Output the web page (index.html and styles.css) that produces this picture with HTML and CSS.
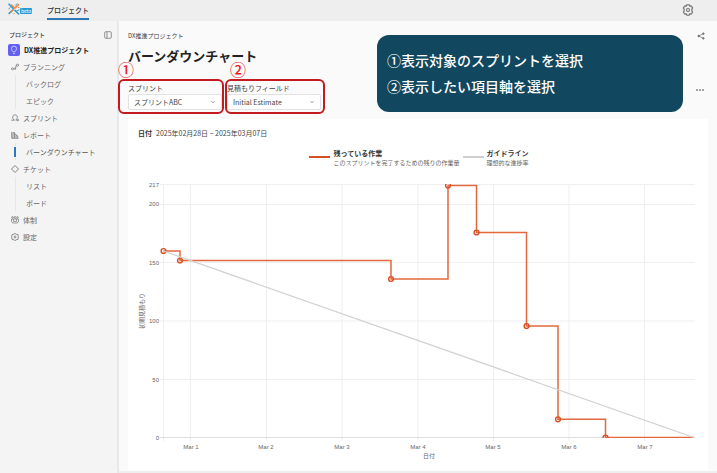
FILE: index.html
```html
<!DOCTYPE html>
<html lang="ja">
<head>
<meta charset="utf-8">
<meta name="viewport" content="width=device-width, initial-scale=1">
<title>バーンダウンチャート</title>
<link rel="stylesheet" href="styles.css">
</head>
<body>
<header class="topbar">
  <a class="brand" href="#">
    <svg class="brand-mark" viewBox="0 0 12 12" fill="none" stroke-width="1.6" stroke-linecap="round">
      <path stroke="#2b9bd8" d="M1 1.2 5.2 5.4M7 7.4l3.6 3.6M1.2 10.4l3.6-3.5"/>
      <path stroke="#f08a3c" d="m6.8 5.2 3.6-3.6M4.8 7.2 3 9M3.4 2l2.8 2.6"/>
      <path stroke="#2b9bd8" stroke-width="1" d="M7.6 2.2 9 .8M8.6 8 11 7M2 4.6.8 6"/>
      <circle cx="10.8" cy="4.4" r=".7" fill="#f08a3c"/>
      <circle cx="6" cy="10.6" r=".7" fill="#f08a3c"/>
    </svg>
    <span class="beta">beta</span>
  </a>
  <nav class="tabs"><a class="tab" href="#">プロジェクト</a></nav>
  <button class="icon-button settings" aria-label="設定">
    <svg viewBox="0 0 12 12" fill="none" stroke="currentColor" stroke-width="1.2" stroke-linejoin="round"><path d="M4.700.8h2.600l.4 1.400 1.400-.3 1.500 2-.7 1.200v1.800l.7 1.200-1.500 2-1.400-.3-.4 1.400H4.700l-.4-1.400-1.400.3-1.500-2 .7-1.200V5.100l-.7-1.200 1.500-2 1.400.3z"/><circle cx="6" cy="6" r="1.500"/></svg>
  </button>
</header>
<div class="shell">
  <aside class="sidebar">
    <div class="side-head">
      <span>プロジェクト</span>
      <button class="icon-button" aria-label="サイドバーを閉じる">
        <svg class="small-icon" viewBox="0 0 8 8" fill="none" stroke="currentColor" stroke-width=".8"><rect x=".7" y=".7" width="6.6" height="6.6" rx="1"/><path d="M3 1v6"/></svg>
      </button>
    </div>
    <a class="project" href="#">
      <svg class="project-icon" viewBox="0 0 12 12"><rect width="12" height="12" rx="2" fill="#6260f5"/><path fill="none" stroke="#d5d5ff" stroke-width=".8" d="M4.8 7.8C4.7 6.8 3.4 6.2 3.4 4.7a2.6 2.6 0 0 1 5.2 0c0 1.5-1.3 2.1-1.4 3.1zM5 9.5h2"/></svg>
      DX推進プロジェクト
    </a>
    <nav class="nav">
      <a class="nav-row" href="#"><svg class="small-icon" viewBox="0 0 8 8" fill="none" stroke="currentColor" stroke-width=".8"><circle cx="1.500" cy="5.800" r="1"/><circle cx="6.500" cy="2.200" r="1.100"/><path d="M2.500 5.800h1.600c1.200 0 .2-3.600 1.400-3.600M3.800 6.900l1.100-1.100-1.100-1"/></svg>プランニング</a>
      <div class="subnav">
        <a class="sub-row" href="#">バックログ</a>
        <a class="sub-row" href="#">エピック</a>
      </div>
      <a class="nav-row" href="#"><svg class="small-icon" viewBox="0 0 8 8" fill="none" stroke="currentColor" stroke-width=".8"><path d="M.3 6.2h3L2 4.6a2.4 2.4 0 1 1 4 0L4.8 6.2h2.8M6.6 5l1.1 1.2-1.1 1"/></svg>スプリント</a>
      <a class="nav-row" href="#"><svg class="small-icon" viewBox="0 0 8 8" fill="none" stroke="currentColor" stroke-width=".8"><path d="M.7.9v6.4h6.8M2 7V1.5h1.5V7M3.5 3.2H5V7M5 4.8h1.7V7"/></svg>レポート</a>
      <div class="subnav">
        <a class="sub-row current" href="#" aria-current="page">バーンダウンチャート</a>
      </div>
      <a class="nav-row" href="#"><svg class="small-icon" viewBox="0 0 8 8" fill="none" stroke="currentColor" stroke-width=".9" stroke-linejoin="round"><path d="M4 .5 7.5 4 4 7.5.5 4z"/></svg>チケット</a>
      <div class="subnav">
        <a class="sub-row" href="#">リスト</a>
        <a class="sub-row" href="#">ボード</a>
      </div>
      <a class="nav-row" href="#"><svg class="small-icon" viewBox="0 0 8 8" fill="none" stroke="currentColor" stroke-width=".7"><circle cx="1.500" cy="1.400" r=".8"/><circle cx="4" cy="1.400" r=".9"/><circle cx="6.500" cy="1.400" r=".8"/><path d="M.5 3h7v2.200L6.500 7h-5l-1-1.800zM2.500 3v2.500h3V3"/></svg>体制</a>
      <a class="nav-row" href="#"><svg class="small-icon" viewBox="0 0 8 8" fill="none" stroke="currentColor" stroke-width=".8" stroke-linejoin="round"><path d="m4 .4 1.1.8 1.900.4.2 1.500L7.500 4l-.3.9L7 6.400l-1.900.4L4 7.600l-1.100-.8L1 6.400.8 4.900.5 4l.3-.9L1 1.600l1.900-.4z"/><circle cx="4" cy="4" r="1"/></svg>設定</a>
    </nav>
  </aside>
  <main class="main">
    <div class="crumbs">
      <span>DX推進プロジェクト</span>
      <button class="icon-button" aria-label="共有">
        <svg class="small-icon" viewBox="0 0 8 8" fill="currentColor" stroke="currentColor" stroke-width=".7"><path fill="none" d="M6.300 1.700 1.900 4l4.400 2.300"/><circle cx="6.300" cy="1.700" r=".9"/><circle cx="1.700" cy="4" r=".9"/><circle cx="6.300" cy="6.300" r=".9"/></svg>
      </button>
    </div>
    <h1 class="title">バーンダウンチャート</h1>
    <div class="filters">
      <div class="field field-sprint">
        <span class="marker">①</span>
        <label for="sprint">スプリント</label>
        <select id="sprint"><option>スプリントABC</option></select>
      </div>
      <div class="field field-estimate">
        <span class="marker">②</span>
        <label for="estimate">見積もりフィールド</label>
        <select id="estimate"><option>Initial Estimate</option></select>
      </div>
      <button class="icon-button more" aria-label="その他">
        <svg class="small-icon" viewBox="0 0 8 8" fill="currentColor"><circle cx="1" cy="4" r=".9"/><circle cx="4" cy="4" r=".9"/><circle cx="7" cy="4" r=".9"/></svg>
      </button>
    </div>
    <section class="card">
      <p class="period"><b>日付</b><span>2025年02月28日 − 2025年03月07日</span></p>
      <div class="legend">
        <div class="legend-item"><i class="swatch swatch-work"></i><div><b>残っている作業</b><small>このスプリントを完了するための残りの作業量</small></div></div>
        <div class="legend-item"><i class="swatch swatch-guide"></i><div><b>ガイドライン</b><small>理想的な進捗率</small></div></div>
      </div>
      <svg class="chart" viewBox="128 174 580 297" role="img" aria-label="バーンダウンチャート">
        <defs><clipPath id="plot"><path d="M159 184h541v254H159z"/></clipPath></defs>
        <path class="grid" d="M160 184.500h535M160 204.500h535M160 262.500h535M160 321h535M160 379.500h535M163.500 184v257M190.500 184v257M266.500 184v257M342 184v257M418 184v257M493.500 184v257M569 184v257M644.500 184v257"/>
        <path class="axis" d="M160 437.500h535"/>
        <g clip-path="url(#plot)">
          <path class="work" d="M163.500 251H180v9.500h211V279h57v-93.500h28.500v47h50V326h31.500v93.300h47.500V437.500H694"/>
          <g class="points">
            <circle cx="163.500" cy="251" r="2.400"/><circle cx="180" cy="260.500" r="2.400"/><circle cx="391" cy="279" r="2.400"/><circle cx="448" cy="185.500" r="2.400"/><circle cx="476.500" cy="232.500" r="2.400"/><circle cx="526.500" cy="326" r="2.400"/><circle cx="558" cy="419.300" r="2.400"/><circle cx="605.500" cy="437.500" r="2.400"/>
          </g>
          <path class="guide" d="m163.500 251 530.500 186.500"/>
        </g>
        <g class="labels" text-anchor="end">
          <text x="159" y="187">217</text><text x="159" y="206">200</text><text x="159" y="265">150</text><text x="159" y="323">100</text><text x="159" y="382">50</text><text x="159" y="440">0</text>
        </g>
        <g class="labels" text-anchor="middle">
          <text x="191" y="449">Mar 1</text><text x="266" y="449">Mar 2</text><text x="342" y="449">Mar 3</text><text x="418" y="449">Mar 4</text><text x="493" y="449">Mar 5</text><text x="569" y="449">Mar 6</text><text x="645" y="449">Mar 7</text>
          <text x="429" y="458">日付</text>
          <text transform="translate(144 311) rotate(-90)">初期見積もり</text>
        </g>
      </svg>
    </section>
    <aside class="callout">
      <p>①表示対象のスプリントを選択</p>
      <p>②表示したい項目軸を選択</p>
    </aside>
  </main>
</div>
</body>
</html>
```
FILE: styles.css
```css
* { box-sizing: border-box; }
body {
  margin: 0;
  min-height: 100vh;
  display: flex;
  flex-direction: column;
  background: #fafafa;
  color: #444;
  font: 7px/10px "Noto Sans CJK JP", sans-serif;
}
a { color: inherit; text-decoration: none; }
p { margin: 0; }
svg { display: block; }
.icon-button {
  display: block;
  padding: 0;
  border: 0;
  background: none;
  color: #777;
}
.small-icon { width: 8px; height: 8px; flex: none; }

.topbar {
  display: flex;
  height: 21px;
  padding: 0 23px 0 8px;
  background: #eee;
}
.brand { display: flex; align-items: center; width: 39px; }
.brand-mark { width: 12px; height: 12px; margin-bottom: 3px; }
.beta {
  padding: 0 1px;
  background: #249bd7;
  color: #fff;
  font-size: 5px;
  line-height: 6px;
  border-radius: 1px;
}
.tabs { display: flex; flex: 1; }
.tab {
  height: 20px;
  border-bottom: 2px solid #2f78b7;
  color: #333;
  font-weight: 500;
  line-height: 20px;
}
.settings svg { width: 12px; height: 12px; margin-bottom: 2px; }

.shell { display: flex; flex: 1; }
.sidebar {
  flex: none;
  width: 119px;
  padding: 9px 7px 0 8px;
  background: #f4f4f4;
  border-right: 2px solid #e8e8e8;
}
.side-head {
  display: flex;
  justify-content: space-between;
  align-items: center;
  height: 10px;
  padding-left: 1px;
  font-size: 6px;
  font-weight: 500;
}
.side-head .icon-button { margin-right: -2px; }
.project {
  display: flex;
  align-items: center;
  gap: 4px;
  height: 19px;
  color: #222;
  font-weight: 700;
}
.project-icon { width: 12px; height: 12px; }
.nav { margin-top: -1px; }
.nav-row, .sub-row { display: flex; align-items: center; height: 17px; color: #666; }
.nav-row { gap: 4px; padding-left: 3px; }
.nav-row .small-icon { color: #777; }
.subnav { margin-left: 7px; border-left: 1px solid #e7e7e7; }
.sub-row { padding-left: 10px; }
.current { position: relative; color: #555; }
.current::before {
  content: "";
  position: absolute;
  left: -2px;
  width: 2px;
  height: 10px;
  background: #2d78c4;
}

.main {
  position: relative;
  flex: 1;
  min-width: 0;
  padding: 10px 9px 0;
  border-bottom: 2px solid #eee;
}
.crumbs {
  display: flex;
  justify-content: space-between;
  align-items: center;
  height: 10px;
  padding-right: 3px;
  font-size: 6px;
}
.title {
  margin: 8px 0 0;
  color: #222;
  font-size: 13px;
  line-height: 14px;
  font-weight: 700;
}
.filters { display: flex; gap: 1px; margin: 16px 0 0 -10px; }
.field {
  position: relative;
  height: 35px;
  border: 2px solid #c31a1f;
  border-radius: 6px;
}
.field-sprint { width: 106px; padding: 1px 0 0 8px; }
.field-estimate { width: 100px; padding: 1px 2px 0 0; }
.field label { display: block; line-height: 12px; }
.field select {
  appearance: none;
  display: block;
  width: 100%;
  height: 16px;
  padding: 0 5px;
  border: 1px solid #e2e2e2;
  border-radius: 2px;
  background: #fff url("data:image/svg+xml,%3Csvg xmlns='http://www.w3.org/2000/svg' viewBox='0 0 4 4'%3E%3Cpath d='M.5 1.200 2 2.700 3.500 1.200' fill='none' stroke='%23777' stroke-width='.8'/%3E%3C/svg%3E") no-repeat right 6px center / 4px;
  color: #444;
  font: inherit;
}
.marker {
  position: absolute;
  top: -20px;
  left: -2px;
  color: #f01818;
  font-size: 16px;
  line-height: 16px;
  font-weight: 500;
}
.field-estimate .marker { left: 3px; }
.more { margin: 7px 4px 0 auto; align-self: flex-start; }

.card { margin-top: 5px; padding: 9px 0 0; background: #fff; }
.period { display: flex; gap: 4px; padding-left: 10px; }
.period b { color: #333; }
.legend {
  display: flex;
  justify-content: center;
  gap: 3px;
  margin: 10px 0 6px;
  padding-left: 2px;
  color: #333;
}
.legend-item { display: flex; gap: 3px; }
.legend b, .legend small { display: block; }
.legend small { font-size: 6px; color: #666; }
.swatch { width: 21px; height: 2px; margin-top: 8px; flex: none; }
.swatch-work { background: #d64f26; }
.swatch-guide { background: #cfcfcf; }

.chart { width: 100%; height: auto; }
.grid { fill: none; stroke: #efefef; }
.axis { stroke: #ddd; }
.work { fill: none; stroke: #e4683e; stroke-width: 1.5; }
.points { fill: none; stroke: #da4e22; stroke-width: 1.4; }
.guide { fill: none; stroke: #d2d2d2; stroke-width: 1.3; }
.labels { fill: #666; font: 6px "Liberation Sans", "Noto Sans CJK JP", sans-serif; }

.callout {
  position: absolute;
  top: 14px;
  right: 34px;
  width: 306px;
  padding: 12px 10px 13px;
  border-radius: 12px;
  background: #11475f;
  color: #fff;
  font-size: 14px;
  line-height: 26px;
  font-weight: 500;
}
```
